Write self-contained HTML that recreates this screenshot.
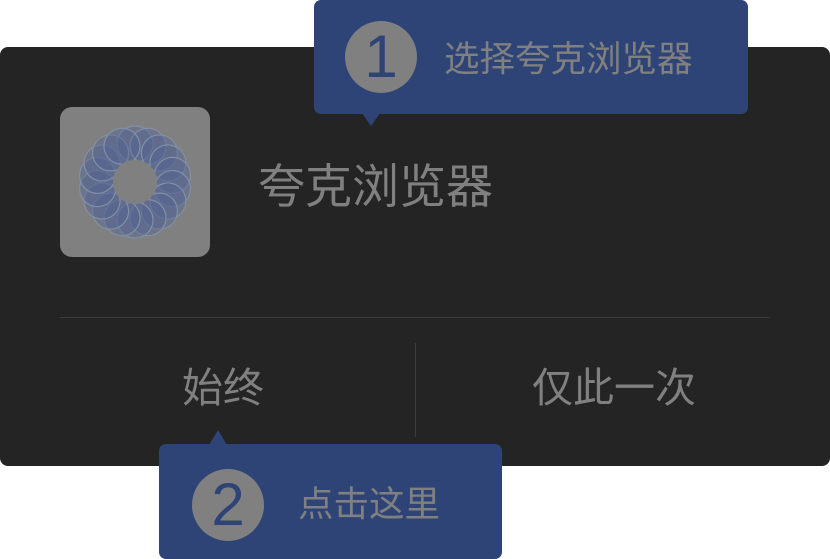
<!DOCTYPE html>
<html><head><meta charset="utf-8"><style>
body{margin:0;width:830px;height:559px;background:#fff;position:relative;overflow:hidden;font-family:"Liberation Sans","Noto Sans CJK SC",sans-serif}
.p{position:absolute;left:0;top:47px;width:830px;height:419px;background:#232423;border-radius:8px}
.t{position:absolute;color:#808080;white-space:nowrap;line-height:1}
.b{position:absolute;background:#2e4477;border-radius:7px}
.c{position:absolute;width:72px;height:72px;border-radius:50%;background:#808080;color:#2e4477;font-size:60px;text-align:center;line-height:72px}
</style></head><body>
<div class="p"></div>
<div style="position:absolute;left:60px;top:107px;width:150px;height:150px;border-radius:12px;background:#808080"></div>
<svg style="position:absolute;left:75px;top:122px" width="120" height="120" viewBox="-60 -60 120 120">
<g fill="#4a5e94" fill-opacity="0.35" stroke="#8090a8" stroke-width="1.2">
<circle cx="0" cy="-38" r="18"/><circle cx="0" cy="-38" r="18" transform="rotate(20)"/><circle cx="0" cy="-38" r="18" transform="rotate(40)"/><circle cx="0" cy="-38" r="18" transform="rotate(60)"/><circle cx="0" cy="-38" r="18" transform="rotate(80)"/><circle cx="0" cy="-38" r="18" transform="rotate(100)"/><circle cx="0" cy="-38" r="18" transform="rotate(120)"/><circle cx="0" cy="-38" r="18" transform="rotate(140)"/><circle cx="0" cy="-38" r="18" transform="rotate(160)"/><circle cx="0" cy="-38" r="18" transform="rotate(180)"/><circle cx="0" cy="-38" r="18" transform="rotate(200)"/><circle cx="0" cy="-38" r="18" transform="rotate(220)"/><circle cx="0" cy="-38" r="18" transform="rotate(240)"/><circle cx="0" cy="-38" r="18" transform="rotate(260)"/><circle cx="0" cy="-38" r="18" transform="rotate(280)"/><circle cx="0" cy="-38" r="18" transform="rotate(300)"/><circle cx="0" cy="-38" r="18" transform="rotate(320)"/><circle cx="0" cy="-38" r="18" transform="rotate(340)"/>
</g>
<circle r="22" fill="#808080"/>
</svg>
<div class="t" style="left:258px;top:163px;font-size:47px">夸克浏览器</div>
<div style="position:absolute;left:60px;top:317px;width:710px;height:1px;background:#3a3b3a"></div>
<div style="position:absolute;left:415px;top:343px;width:1px;height:94px;background:#3a3b3a"></div>
<div class="t" style="left:182px;top:368px;font-size:41px">始终</div>
<div class="t" style="left:532px;top:368px;font-size:41px">仅此一次</div>

<div class="b" style="left:314px;top:0;width:434px;height:114px"></div>
<div style="position:absolute;left:362px;top:113px;width:0;height:0;border-left:9px solid transparent;border-right:9px solid transparent;border-top:13px solid #2e4477"></div>
<div class="c" style="left:345px;top:21px">1</div>
<div class="t" style="left:444px;top:42px;font-size:35.5px">选择夸克浏览器</div>

<div class="b" style="left:159px;top:444px;width:343px;height:115px"></div>
<div style="position:absolute;left:209px;top:430px;width:0;height:0;border-left:9px solid transparent;border-right:9px solid transparent;border-bottom:15px solid #2e4477"></div>
<div class="c" style="left:192px;top:469px">2</div>
<div class="t" style="left:298px;top:487px;font-size:35.5px">点击这里</div>
</body></html>
